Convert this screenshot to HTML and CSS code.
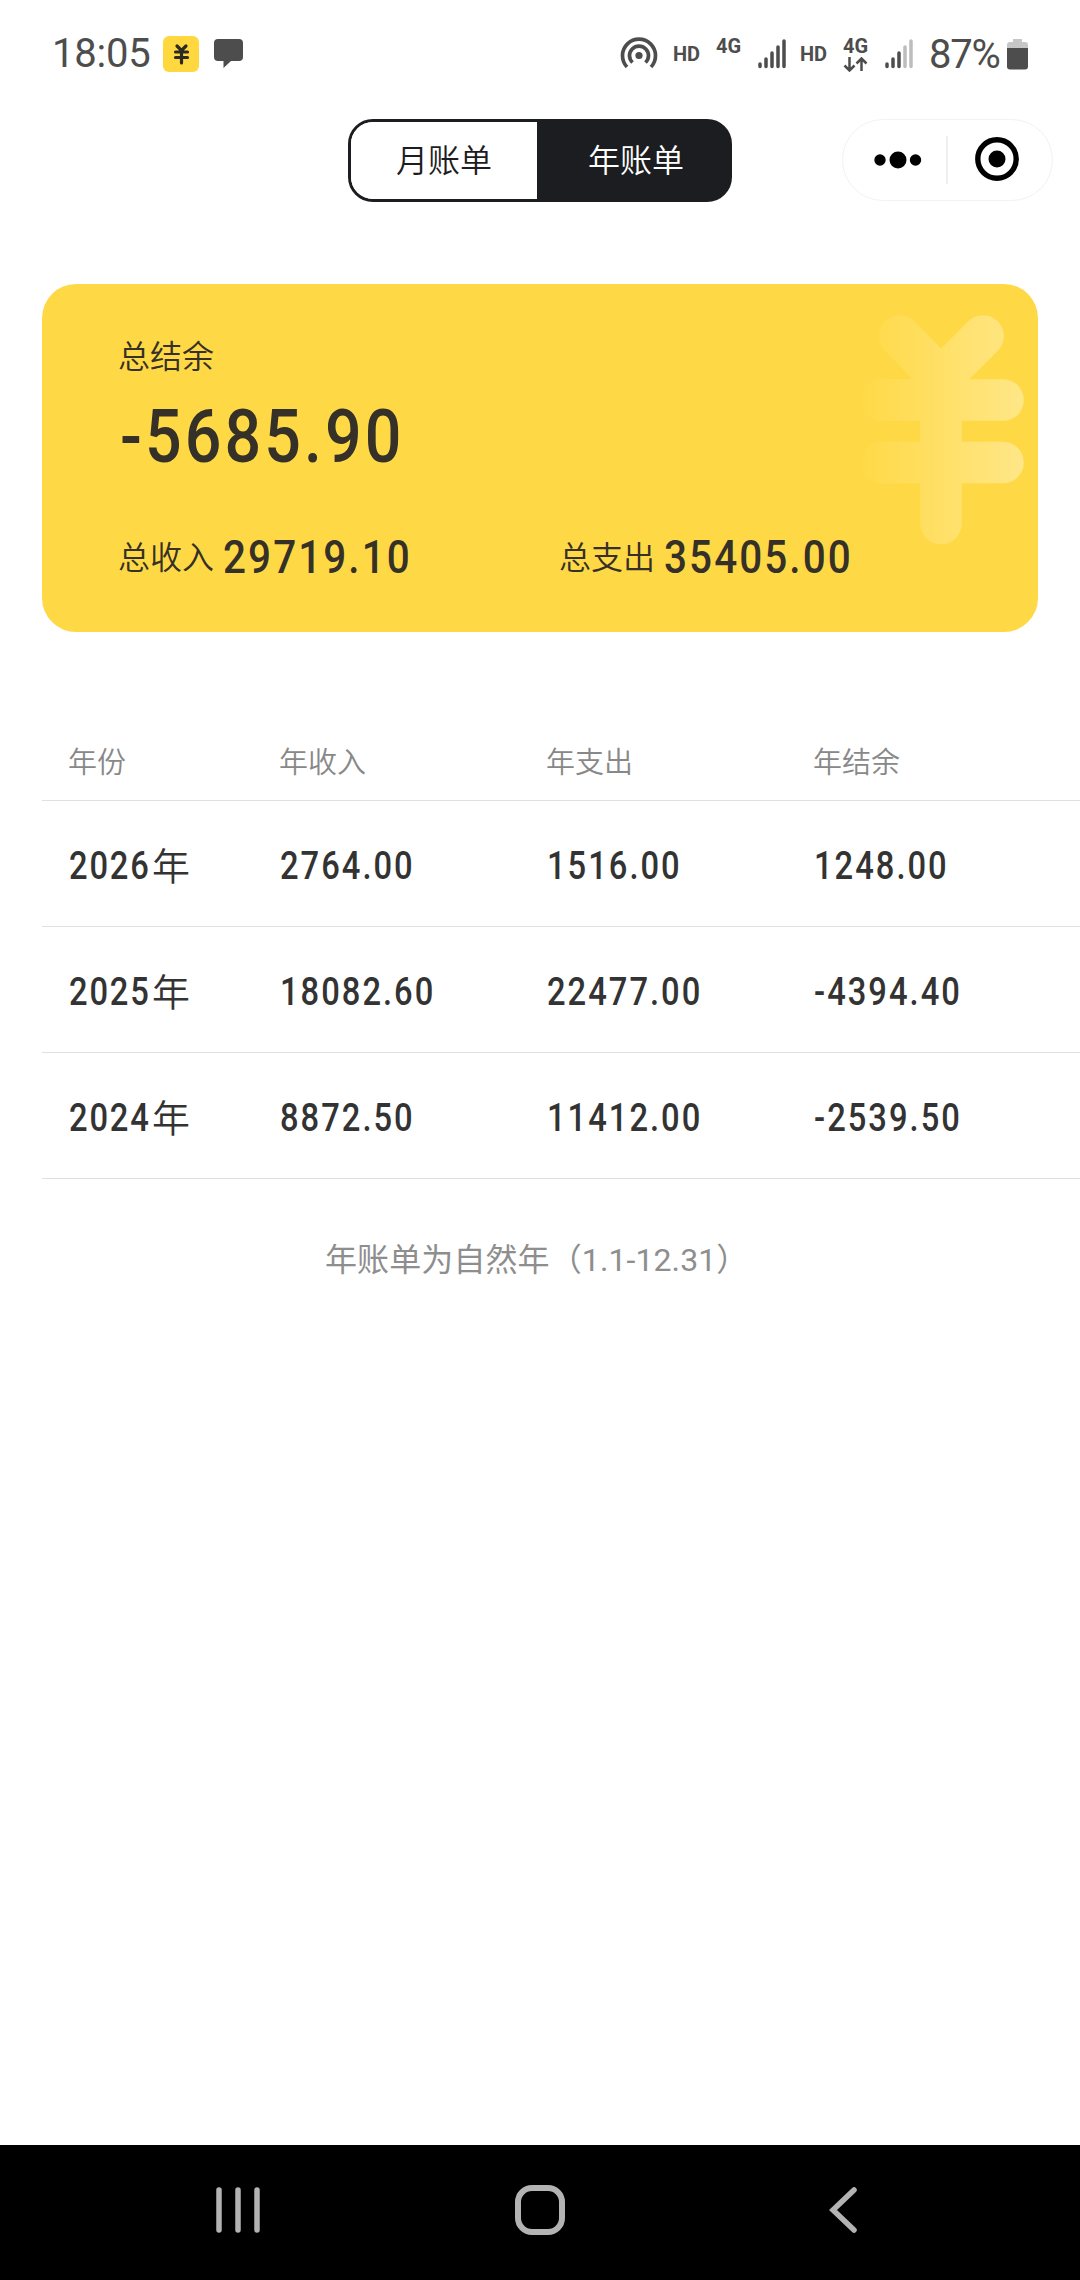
FILE: index.html
```html
<!DOCTYPE html>
<html lang="zh-CN">
<head>
<meta charset="utf-8">
<title>年账单</title>
<link rel="stylesheet" href="styles.css">
</head>
<body>
<div class="screen">
  <header class="status">
    <span class="clock">18:05</span>
    <svg class="app-icon" width="36" height="36" viewBox="0 0 36 36"><rect width="36" height="36" rx="6" fill="#ffd83f"/><path d="M14 10l4.500 4.500L23 10M12.500 16h12M12.500 21.500h12M18.500 15v12" fill="none" stroke="#2d2a24" stroke-width="3.200" stroke-linecap="round"/></svg>
    <svg class="bubble" width="29" height="30" viewBox="0 0 29 30"><path d="M4 0h21a4 4 0 0 1 4 4v14a4 4 0 0 1-4 4h-8l-7.500 7V22H4a4 4 0 0 1-4-4V4a4 4 0 0 1 4-4z" fill="#4d4d4d"/></svg>
    <svg class="hotspot" width="38" height="34" viewBox="0 0 38 34"><g fill="none" stroke="#4d4d4d" stroke-width="3.700"><path d="M7 30A16.500 16.500 0 1 1 31 30"/><path d="M12.500 25.500A9.500 9.500 0 1 1 25.500 25.500"/></g><circle cx="19" cy="18.500" r="3.600" fill="#4d4d4d"/></svg>
    <span class="tag hd">HD</span>
    <span class="tag net">4G</span>
    <svg class="signal" width="28" height="30" viewBox="0 0 28 30"><path d="M2 25v2.500M8 20v7.500M14 14v13.500M20 8v19.500M26 2v25.500" stroke="#4d4d4d" stroke-width="3.500" stroke-linecap="round"/></svg>
    <span class="tag hd second">HD</span>
    <span class="tag net data">4G<svg width="25" height="15" viewBox="0 0 25 15"><path d="M6.500 0v13M1.500 8.500l5 5 5-5M18.500 14V1.500M13.500 6.500l5-5 5 5" fill="none" stroke="#4d4d4d" stroke-width="2.500"/></svg></span>
    <svg class="signal last" width="28" height="30" viewBox="0 0 28 30"><path d="M2 25v2.500M8 20v7.500M14 14v13.500" stroke="#4d4d4d" stroke-width="3.500" stroke-linecap="round"/><path d="M20 8v19.500M26 2v25.500" stroke="#bdbdbd" stroke-width="3.500" stroke-linecap="round"/></svg>
    <span class="percent">87%</span>
    <svg class="battery" width="21" height="31" viewBox="0 0 21 31"><path d="M6 0h9v3h3a3 3 0 0 1 3 3v4H0V6a3 3 0 0 1 3-3h3z" fill="#c6c6c6"/><path d="M0 9h21v18.500a3 3 0 0 1-3 3H3a3 3 0 0 1-3-3z" fill="#4d4d4d"/></svg>
  </header>

  <div class="topbar">
    <div class="toggle">
      <span class="tab">月账单</span>
      <span class="tab active">年账单</span>
    </div>
    <div class="capsule">
      <svg width="48" height="20" viewBox="0 0 48 20"><circle cx="6" cy="10" r="5.700"/><circle cx="24" cy="10" r="8.500"/><circle cx="41.500" cy="10" r="5.700"/></svg>
      <span class="divider"></span>
      <svg class="target" width="46" height="46" viewBox="0 0 46 46"><circle cx="23" cy="23" r="19.200" fill="none" stroke="#000" stroke-width="5.400"/><circle cx="23" cy="23" r="8.500"/></svg>
    </div>
  </div>

  <section class="card">
    <svg class="watermark" width="170" height="236" viewBox="0 0 170 236">
      <defs>
        <linearGradient id="fade" gradientUnits="userSpaceOnUse" x1="0" y1="0" x2="166" y2="0"><stop offset="0" stop-color="#fff" stop-opacity="0"/><stop offset="1" stop-color="#fff" stop-opacity=".36"/></linearGradient>
      </defs>
      <path d="M41.500 27L83 69l42-42M24 91h121M24 153.500h121M83 69v145.500" fill="none" stroke="url(#fade)" stroke-width="41.500" stroke-linecap="round" stroke-linejoin="round"/>
    </svg>
    <div class="label">总结余</div>
    <div class="balance"><span class="num">-5685.90</span></div>
    <div class="totals">
      <div class="total"><span class="label">总收入</span><span class="num">29719.10</span></div>
      <div class="total"><span class="label">总支出</span><span class="num">35405.00</span></div>
    </div>
  </section>

  <section class="table">
    <div class="row head"><span>年份</span><span>年收入</span><span>年支出</span><span>年结余</span></div>
    <div class="row"><span class="year"><span class="num">2026</span>年</span><span class="num">2764.00</span><span class="num">1516.00</span><span class="num">1248.00</span></div>
    <div class="row"><span class="year"><span class="num">2025</span>年</span><span class="num">18082.60</span><span class="num">22477.00</span><span class="num">-4394.40</span></div>
    <div class="row"><span class="year"><span class="num">2024</span>年</span><span class="num">8872.50</span><span class="num">11412.00</span><span class="num">-2539.50</span></div>
  </section>
  <p class="note">年账单为自然年（1.1-12.31）</p>

  <nav class="navbar">
    <svg width="44" height="48" viewBox="0 0 44 48"><path d="M3 4v40M22 4v40M41 4v40" stroke="#b3b3b3" stroke-width="5.500" stroke-linecap="round"/></svg>
    <svg class="home" width="50" height="50" viewBox="0 0 50 50"><rect x="3" y="3" width="44" height="44" rx="14" fill="none" stroke="#b3b3b3" stroke-width="6"/></svg>
    <svg width="28" height="48" viewBox="0 0 28 48"><path d="M25 4L4 24l21 20" fill="none" stroke="#b3b3b3" stroke-width="5.500" stroke-linecap="round"/></svg>
  </nav>
</div>
</body>
</html>
```
FILE: styles.css
```css
* { box-sizing: border-box; }
body { margin: 0; background: #fff; font-family: Roboto, "Noto Sans CJK SC", sans-serif; color: #333; }
svg { display: block; flex: none; }
.screen { width: 1080px; height: 2280px; display: flex; flex-direction: column; overflow: hidden; }

.status { height: 108px; flex: none; display: flex; align-items: center; padding: 0 52px 0 52px; color: #4d4d4d; }
.clock { width: 111px; font-size: 40px; line-height: 108px; letter-spacing: -.2px; }
.bubble { margin-left: 15px; }
.hotspot { margin-left: auto; }
.tag { font-size: 20px; font-weight: 700; line-height: 20px; flex: none; }
.hd { width: 28px; margin-left: 15px; }
.net { width: 27px; height: 34px; margin: -2px 0 0 15px; }
.signal { margin-left: 15px; }
.hd.second { margin-left: 14px; }
.data svg { margin-top: 1px; }
.percent { width: 77px; margin-left: 16px; font-size: 40px; letter-spacing: -1.200px; }
.battery { margin-left: 1px; }

.topbar { display: flex; margin-top: 11px; padding-left: 348px; }
.toggle { width: 384px; height: 83px; display: flex; border: 3px solid #1c1d21; border-radius: 25px; background: linear-gradient(90deg, #fff 50%, #1c1d21 50%); }
.tab { width: 186px; font-size: 32px; line-height: 79px; height: 77px; text-align: center; color: #1c1d21; font-weight: 350; }
.tab:first-child { border-radius: 22px 0 0 22px; background: #fff; }
.tab.active { flex: 1; background: #1c1d21; color: #fff; padding-left: 6px; border-radius: 0 21px 21px 0; }
.capsule { width: 211px; height: 82px; margin-left: 110px; border: 1px solid #f2f2f2; border-radius: 41px; display: flex; align-items: center; padding-left: 31px; }
.divider { width: 2px; height: 48px; margin-left: 24px; background: #efefef; }
.target { margin: -2px 0 0 26px; }

.card { position: relative; height: 348px; margin: 82px 42px 0; padding: 53px 76px 0; border-radius: 34px; background: #ffd945; color: #353028; }
.watermark { position: absolute; right: 10px; top: 25px; }
.label { font-size: 32px; line-height: 40px; font-weight: 350; }
.num { display: inline-block; white-space: nowrap; font-weight: 500; transform: scaleX(.86); transform-origin: left center; letter-spacing: .062em; }
.balance { font-size: 75px; line-height: 80px; margin-top: 19px; height: 80px; }
.balance .num { letter-spacing: .048em; margin-left: 2px; }
.totals { display: flex; margin-top: 61px; }
.total { width: 441px; flex: none; display: flex; align-items: center; height: 42px; }
.total .num { font-size: 47px; line-height: 38px; margin: -2px 0 0 9px; letter-spacing: .052em; }

.table { margin: 92px 0 0 42px; }
.row { height: 126px; display: grid; grid-template-columns: 211px 267px 267px 1fr; align-items: center; padding-left: 26px; border-bottom: 1px solid #e0e0e0; font-size: 38px; }
.row > .num { padding-top: 5px; margin-left: .5px; }
.row.head { height: 77px; font-size: 29px; font-weight: 350; color: #888; padding-bottom: 4px; }
.year { display: flex; align-items: center; font-weight: 350; }
.year .num { width: 83px; padding-top: 5px; margin-left: 1px; letter-spacing: .056em; }
.note { margin: 51px 0 0; padding-left: 325px; font-size: 32px; line-height: 60px; color: #8e8e8e; font-weight: 400; letter-spacing: .1px; }

.navbar { height: 135px; margin-top: auto; flex: none; display: flex; align-items: center; justify-content: space-between; padding: 0 223px 6px 216px; background: #000; }
.home { margin-right: 9px; }
```
